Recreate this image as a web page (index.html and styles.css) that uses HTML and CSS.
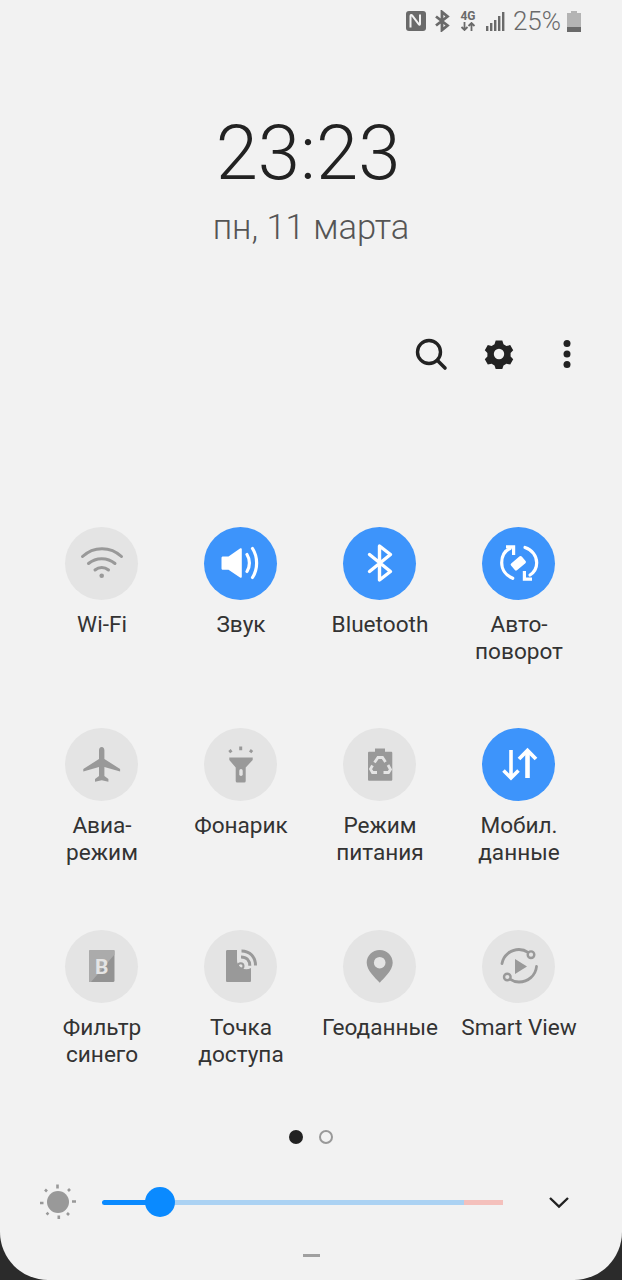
FILE: index.html
```html
<!DOCTYPE html>
<html lang="en">
<head>
  <meta charset="UTF-8">
  <title>Quick panel</title>
  <link rel="stylesheet" href="styles.css">
</head>
<body>
<main class="panel">

  <!-- status bar -->
  <header class="status">
    <svg class="st-nfc" width="22" height="22" viewBox="0 0 22 22">
      <rect x="1" y="1" width="20" height="20" rx="3" fill="#6a6a6a"/>
      <path d="M5.500 17.500V6c0-1 1-1.300 1.600-.6l6.800 9c.5.700 1.100.4 1.100-.3V4.500" fill="none" stroke="#f2f2f2" stroke-width="2"/>
    </svg>
    <svg class="st-bt" width="16" height="22" viewBox="0 0 16 22">
      <path d="M2 6.500l11.500 9L8 20V2l5.500 4.500L2 15.500" fill="none" stroke="#6a6a6a" stroke-width="2.800"/>
    </svg>
    <div class="st-net">
      <span class="st-4g">4G</span>
      <svg width="16" height="9" viewBox="0 0 16 9">
        <path d="M4.500 0v8M1.500 5l3 3 3-3M11.500 9V1M8.500 4l3-3 3 3" fill="none" stroke="#6a6a6a" stroke-width="1.800"/>
      </svg>
    </div>
    <svg class="st-signal" width="19" height="19" viewBox="0 0 19 19" fill="#6a6a6a">
      <rect x="0" y="14" width="2.400" height="5"/>
      <rect x="4" y="11" width="2.400" height="8"/>
      <rect x="8" y="8" width="2.400" height="11"/>
      <rect x="12" y="4" width="2.400" height="15"/>
      <rect x="16" y="0" width="2.400" height="19"/>
    </svg>
    <span class="st-pct">25%</span>
    <svg class="st-batt" width="14" height="22" viewBox="0 0 14 22">
      <path d="M4 1h6v2h4v19H0V3h4z" fill="#b4b4b4"/>
      <rect y="17" width="14" height="5" fill="#6a6a6a"/>
    </svg>
  </header>

  <section class="clock">
    <div class="time">23:23</div>
    <div class="date">пн, 11 марта</div>
  </section>

  <nav class="tools">
    <svg class="tool" width="36" height="36" viewBox="0 0 36 36">
      <circle cx="16" cy="16" r="11.500" fill="none" stroke="#222" stroke-width="3.400"/>
      <path d="M24.500 24.500L32 32" stroke="#222" stroke-width="3.600" stroke-linecap="round"/>
    </svg>
    <svg class="tool" width="36" height="36" viewBox="0 0 36 36">
      <path d="M18 4.500l3.300 0 1.200 3.700 2.900 1.700 3.800-.8 3 5.100-2.600 2.900v3.400l2.600 2.800-3 5.200-3.800-.8-2.900 1.700-1.200 3.700h-6.600l-1.200-3.700-2.900-1.700-3.800.8-3-5.200 2.600-2.800v-3.400l-2.600-2.900 3-5.100 3.800.8 2.900-1.700 1.200-3.700z" fill="#222"/>
      <circle cx="18" cy="18" r="5.200" fill="#f2f2f2"/>
    </svg>
    <svg class="tool" width="36" height="36" viewBox="0 0 36 36" fill="#222">
      <circle cx="18" cy="7.500" r="3.500"/>
      <circle cx="18" cy="18" r="3.500"/>
      <circle cx="18" cy="28.500" r="3.500"/>
    </svg>
  </nav>

  <section class="tiles">

    <div class="tile">
      <div class="disc">
        <svg viewBox="0 0 73 73" fill="none" stroke="#999" stroke-width="3" stroke-linecap="round">
          <path d="M17.500 29.500c11-10.500 28-10.500 39 0"/>
          <path d="M23.500 36.500c7.500-6.500 19-6.500 26.500 0"/>
          <path d="M30 43c4-3.500 9.500-3.500 13.500 0"/>
          <circle cx="36.700" cy="48.800" r="2.300" fill="#999" stroke="none"/>
        </svg>
      </div>
      <div class="label">Wi-Fi</div>
    </div>

    <div class="tile on">
      <div class="disc">
        <svg viewBox="0 0 73 73">
          <path d="M17.500 31c0-1 .6-1.500 1.500-1.500h5.500L36 21.500c1-.6 1.800-.1 1.800 1v27c0 1.100-.8 1.600-1.800 1l-11.500-7.800H19c-.9 0-1.500-.5-1.500-1.500z" fill="#fff"/>
          <path d="M43 27.500c3.200 5 3.200 12 0 17M48.500 21.500c5.500 8.500 5.500 20.500 0 29" fill="none" stroke="#fff" stroke-width="3.200" stroke-linecap="round"/>
        </svg>
      </div>
      <div class="label">Звук</div>
    </div>

    <div class="tile on">
      <div class="disc">
        <svg viewBox="0 0 73 73">
          <path d="M26.500 27.500L47.500 44.500 36.500 53V19L47.500 27.500 26.500 44.500" fill="none" stroke="#fff" stroke-width="3.400" stroke-linecap="round" stroke-linejoin="round"/>
        </svg>
      </div>
      <div class="label">Bluetooth</div>
    </div>

    <div class="tile on">
      <div class="disc">
        <svg viewBox="0 0 73 73">
          <path d="M28 21.500C22.500 24 19.700 29.500 19.700 35.700c0 6.800 4.300 12.800 11 15.600" fill="none" stroke="#fff" stroke-width="3.200" stroke-linecap="round"/>
          <path d="M43 20.500c7 2.300 11.700 8.300 11.700 15.200 0 5-2.500 9.500-6.700 12.300" fill="none" stroke="#fff" stroke-width="3.200" stroke-linecap="round"/>
          <path d="M24 19.800h7.600v8.200M50 52.200h-7.600V44" fill="none" stroke="#fff" stroke-width="3.200"/>
          <rect x="29.300" y="31.800" width="14" height="9" rx="1.500" transform="rotate(-40 36.300 36.300)" fill="#fff"/>
        </svg>
      </div>
      <div class="label">Авто-<br>поворот</div>
    </div>

    <div class="tile">
      <div class="disc">
        <svg viewBox="0 0 73 73">
          <path d="M36.700 19c-1.700 0-2.700 1.500-2.700 3.500V31L18.300 41v2.500L34 39v9l-4 3v2.700l6.700-1.500 6.700 1.500V51l-4-3v-9l15.700 4.500V41L39.400 31v-8.500c0-2-1-3.500-2.700-3.500z" fill="#999"/>
        </svg>
      </div>
      <div class="label">Авиа-<br>режим</div>
    </div>

    <div class="tile">
      <div class="disc">
        <svg viewBox="0 0 73 73">
          <path d="M25.300 29.500h23.400v2.500l-7 7.500V53a1.500 1.500 0 0 1-1.500 1.500h-7a1.500 1.500 0 0 1-1.500-1.500V39.500l-6.400-7.500z" fill="#999"/>
          <rect x="35.300" y="41" width="3.400" height="7" rx="1.700" fill="#e4e4e4"/>
          <path d="M25.500 22l1.800 2.400M36.700 18.500v3.700M48 22l-1.800 2.400" fill="none" stroke="#999" stroke-width="3"/>
        </svg>
      </div>
      <div class="label">Фонарик</div>
    </div>

    <div class="tile">
      <div class="disc">
        <svg viewBox="0 0 73 73">
          <path d="M32 20.500h10v3.300h6c.8 0 1.300.5 1.300 1.300v26.400c0 .8-.5 1.300-1.300 1.300H26.300c-.8 0-1.300-.5-1.300-1.300V25.100c0-.8.5-1.300 1.300-1.300h5.700z" fill="#999"/>
          <path d="M31.500 34.500L35 29.500h4.500L42.500 34M45 37l2.500 4.500-2 3H40.500M34 44.500h-4.500L27.500 41l2-3.500" fill="none" stroke="#e4e4e4" stroke-width="2.800"/>
        </svg>
      </div>
      <div class="label">Режим<br>питания</div>
    </div>

    <div class="tile on">
      <div class="disc">
        <svg viewBox="0 0 73 73" fill="none" stroke="#fff" stroke-width="3.600">
          <path d="M29 22v27M21.500 42.500l7.500 7.500 7.500-7.500"/>
          <path d="M45.500 50V24" stroke-width="4.600"/>
          <path d="M37 31l8.500-8.500L54 31" stroke-width="3.800"/>
        </svg>
      </div>
      <div class="label">Мобил.<br>данные</div>
    </div>

    <div class="tile">
      <div class="disc">
        <svg viewBox="0 0 73 73">
          <rect x="24" y="20" width="25.500" height="32" rx="1.500" fill="#939393"/>
          <path d="M25.500 20h24v4.500L26 52h-2V21.500c0-1 .5-1.500 1.500-1.500z" fill="#ababab"/>
          <text x="36.700" y="44" class="blue-b">B</text>
        </svg>
      </div>
      <div class="label">Фильтр<br>синего</div>
    </div>

    <div class="tile">
      <div class="disc">
        <svg viewBox="0 0 73 73">
          <path d="M23.500 20H33v9a9.500 9.500 0 0 0 14 9v12.500c0 1-.5 1.500-1.500 1.500h-22c-1 0-1.500-.5-1.500-1.500v-29c0-1 .5-1.500 1.500-1.500z" fill="#999"/>
          <circle cx="36.700" cy="36" r="2.800" fill="none" stroke="#999" stroke-width="2"/>
          <path d="M37 27c5.500 0 8.800 3.500 8.800 8.800M37.500 21c8.500 0 14 6 14 14.500" fill="none" stroke="#999" stroke-width="3"/>
        </svg>
      </div>
      <div class="label">Точка<br>доступа</div>
    </div>

    <div class="tile">
      <div class="disc">
        <svg viewBox="0 0 73 73">
          <path d="M36.700 20c-7.400 0-13 5.800-13 12.800 0 7.700 8.600 15.200 13 20 4.400-4.800 13-12.300 13-20C49.700 25.800 44.100 20 36.700 20z" fill="#999"/>
          <circle cx="36.700" cy="32.700" r="5.800" fill="#e4e4e4"/>
        </svg>
      </div>
      <div class="label">Геоданные</div>
    </div>

    <div class="tile">
      <div class="disc">
        <svg viewBox="0 0 73 73">
          <path d="M20 33.500c1.500-8.500 9-14 17-14 3.500 0 6.500 1 9 2.800M54.500 36.500c-.8 9-8.500 15.500-17.500 15.500-3.500 0-6.500-1-9-2.800" fill="none" stroke="#999" stroke-width="2.800" stroke-linecap="round"/>
          <circle cx="49" cy="24.700" r="3.300" fill="none" stroke="#999" stroke-width="2.400"/>
          <circle cx="25.300" cy="47" r="3.300" fill="none" stroke="#999" stroke-width="2.400"/>
          <path d="M33 29v15l12-7.500z" fill="#999"/>
        </svg>
      </div>
      <div class="label">Smart View</div>
    </div>

  </section>

  <div class="pager">
    <span class="dot dot-active"></span>
    <span class="dot"></span>
  </div>

  <!-- brightness row -->
  <section class="brightness">
    <svg class="sun" width="40" height="40" viewBox="0 0 40 40">
      <circle cx="19" cy="20" r="11" fill="#999"/>
      <path d="M18.500 2.500v4M19.800 33.500v3.500M1 21h3.500M33 19.500h4M6 7.500l2 2M31 7l-2 2M7.500 32.500l2-1.700M28 31l2 2" stroke="#999" stroke-width="2.600"/>
    </svg>
    <div class="slider">
      <div class="slider-fill"></div>
      <div class="slider-rest"></div>
      <div class="slider-hot"></div>
      <div class="slider-thumb"></div>
    </div>
    <svg class="chevron" width="22" height="14" viewBox="0 0 22 14">
      <path d="M2 3l9 8.500L20 3" fill="none" stroke="#222" stroke-width="2.400"/>
    </svg>
  </section>

  <div class="handle"></div>

</main>
</body>
</html>
```

FILE: styles.css
```css
html, body {
  margin: 0;
  padding: 0;
  background: #2b2b2b;
}
.panel {
  width: 622px;
  height: 1280px;
  background: #f2f2f2;
  border-radius: 0 0 48px 48px;
  overflow: hidden;
  font-family: Roboto, "Noto Sans", sans-serif;
  color: #222;
}

/* status bar */
.status {
  height: 42px;
  display: flex;
  align-items: center;
  justify-content: flex-end;
  padding-right: 41px;
  box-sizing: border-box;
  color: #6a6a6a;
}
.st-bt { margin-left: 7px; }
.st-net {
  margin-left: 10px;
  width: 16px;
  display: flex;
  flex-direction: column;
  align-items: center;
}
.st-4g {
  font-size: 12px;
  line-height: 11px;
  font-weight: 700;
}
.st-signal { margin-left: 10px; }
.st-pct {
  margin-left: 8px;
  font-size: 26px;
  line-height: 30px;
  font-weight: 300;
}
.st-batt { margin-left: 6px; }

/* clock */
.clock {
  padding-top: 68px;
  text-align: center;
}
.time {
  padding-right: 6px;
  font-size: 76px;
  line-height: 86px;
  font-weight: 300;
}
.date {
  margin-top: 11px;
  font-size: 34.5px;
  line-height: 40px;
  font-weight: 300;
  color: #555;
}

/* search, settings, more */
.tools {
  margin-top: 87px;
  height: 40px;
  display: flex;
  justify-content: flex-end;
  align-items: center;
  gap: 32px;
  padding-right: 37px;
}

/* quick toggles */
.tiles {
  margin: 153px 32px 0;
  display: grid;
  grid-template-columns: repeat(4, 139px);
  grid-template-rows: 201px 202px 200px;
}
.tile {
  text-align: center;
}
.disc {
  width: 73px;
  height: 73px;
  margin: 0 auto;
  border-radius: 50%;
  background: #e4e4e4;
}
.disc svg {
  display: block;
  width: 73px;
  height: 73px;
}
.on .disc { background: #3d94fb; }
.label {
  margin-top: 10.5px;
  padding-left: 1px;
  font-size: 22.6px;
  line-height: 27px;
  color: #333;
  white-space: nowrap;
}
.blue-b {
  font-family: Roboto, sans-serif;
  font-size: 21px;
  font-weight: 700;
  text-anchor: middle;
  fill: #e4e4e4;
}

.pager {
  height: 14px;
  display: flex;
  justify-content: center;
  gap: 15.5px;
}
.dot {
  width: 14px;
  height: 14px;
  box-sizing: border-box;
  border: 2.5px solid #999;
  border-radius: 50%;
}
.dot-active {
  background: #222;
  border-color: #222;
}

/* brightness slider */
.brightness {
  margin-top: 43px;
  height: 30px;
  display: flex;
  align-items: center;
  padding-left: 39px;
}
.sun { flex: none; }
.slider {
  position: relative;
  margin-left: 23px;
  width: 401px;
  height: 5px;
  display: flex;
}
.slider-fill {
  width: 58px;
  background: #0a8aff;
  border-radius: 3px 0 0 3px;
}
.slider-rest {
  flex: 1;
  background: #abd2f3;
}
.slider-hot {
  width: 39px;
  background: #f4c0bc;
}
.slider-thumb {
  position: absolute;
  left: 43px;
  top: -12.5px;
  width: 30px;
  height: 30px;
  border-radius: 50%;
  background: #0a8aff;
}
.chevron { margin-left: 45px; }

.handle {
  width: 17px;
  height: 3px;
  margin: 37px auto 0;
  background: #a0a0a0;
}
```
